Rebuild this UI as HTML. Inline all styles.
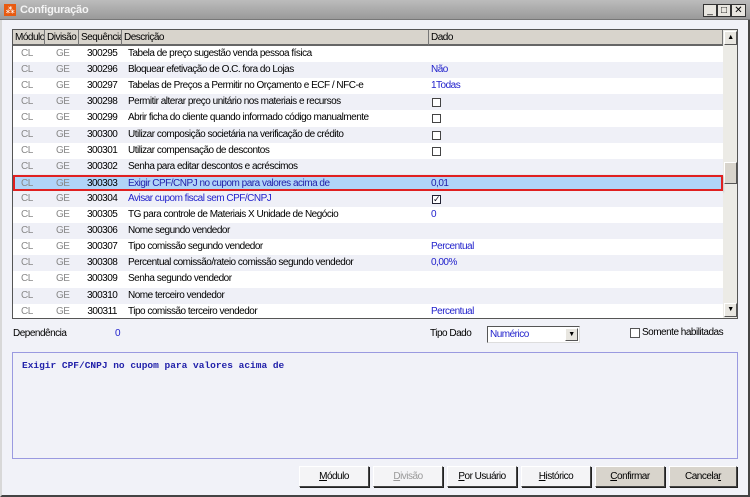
<!DOCTYPE html>
<html><head><meta charset="utf-8"><style>
*{box-sizing:border-box;margin:0;padding:0}
body{width:750px;height:497px;overflow:hidden;background:#f1f2f8;font-family:"Liberation Sans",sans-serif;font-size:10px;letter-spacing:-0.5px;color:#000;position:relative}
.abs{position:absolute}
#title{left:0;top:0;width:750px;height:20px;background:linear-gradient(#bcbcbc,#9a9a9a);color:#f4f4f4;font-weight:bold;font-size:11px;letter-spacing:-0.2px;line-height:20px;padding-left:20px;border-bottom:1px solid #777}
#win{left:0;top:20px;width:750px;height:477px;border:2px solid #d8d8d8;border-top:none;border-bottom:2px solid #444;border-right:2px solid #444}
.tb{top:4px;width:14px;height:13px;background:#e8e6e0;border:1px solid #333;font-size:10px;line-height:11px;text-align:center;color:#000;letter-spacing:0}
#grid{left:12px;top:29px;width:726px;height:290px;border:1px solid #555;background:#fff;overflow:hidden}
.hdr{position:absolute;top:0;height:16px;background:#d8d4cc;border-right:1px solid #777;border-bottom:2px solid #666;line-height:15px;padding-left:2px;font-size:10px;white-space:nowrap;overflow:hidden}
.row{position:absolute;left:0;width:710px;height:16.1px;line-height:16px;font-size:10px}
.row span{position:absolute;top:0;white-space:nowrap}
.c1{left:8px;color:#888}.c2{left:43px;color:#888}.c3{left:74px;width:30px;text-align:right}.c4{left:115px}.c5{left:418px;color:#2222cc}
.cb{position:absolute;left:419px;top:4px;width:9px;height:9px;border:1px solid #444;background:#fff}
#sb{left:710px;top:0;width:15px;height:288px;background:#ecebe6}
.btn{position:absolute;top:466px;height:21px;border:1px solid #444;border-top-color:#fff;border-left-color:#fff;box-shadow:1px 1px 0 #222;background:#f4f4f6;text-align:center;line-height:19px;font-size:10px}
</style></head><body>
<div id="title" class="abs">Configuração</div>
<div class="abs" style="left:4px;top:4px;width:12px;height:12px;background:#e85a10;color:#fff;font-size:9px;line-height:12px;text-align:center">⁂</div>
<div class="abs tb" style="left:703px">_</div>
<div class="abs tb" style="left:717px">□</div>
<div class="abs tb" style="left:731px;width:15px">✕</div>
<div id="win" class="abs"></div>

<div id="grid" class="abs">
<div class="hdr" style="left:0;width:32px">Módulo</div>
<div class="hdr" style="left:32px;width:34px">Divisão</div>
<div class="hdr" style="left:66px;width:43px">Sequência</div>
<div class="hdr" style="left:109px;width:307px">Descrição</div>
<div class="hdr" style="left:416px;width:294px">Dado</div>
<div id="sb" class="abs">
 <div class="abs" style="left:1px;top:1px;width:13px;height:14px;background:#e8e6e0;border:1px solid #555;border-top-color:#fff;border-left-color:#fff;font-size:7px;text-align:center;line-height:12px">▲</div>
 <div class="abs" style="left:1px;top:132px;width:13px;height:22px;background:#d8d4cc;border:1px solid #555;border-top-color:#fff;border-left-color:#fff"></div>
 <div class="abs" style="left:1px;top:273px;width:13px;height:14px;background:#e8e6e0;border:1px solid #555;border-top-color:#fff;border-left-color:#fff;font-size:7px;text-align:center;line-height:12px">▼</div>
</div>
<div class="row" style="top:16px;background:#fff"><span class="c1">CL</span><span class="c2">GE</span><span class="c3">300295</span><span class="c4">Tabela de preço sugestão venda pessoa física</span></div>
<div class="row" style="top:32.1px;background:#eff0f7"><span class="c1">CL</span><span class="c2">GE</span><span class="c3">300296</span><span class="c4">Bloquear efetivação de O.C. fora do Lojas</span><span class="c5">Não</span></div>
<div class="row" style="top:48.2px;background:#fff"><span class="c1">CL</span><span class="c2">GE</span><span class="c3">300297</span><span class="c4">Tabelas de Preços a Permitir no Orçamento e ECF / NFC-e</span><span class="c5">1Todas</span></div>
<div class="row" style="top:64.3px;background:#eff0f7"><span class="c1">CL</span><span class="c2">GE</span><span class="c3">300298</span><span class="c4">Permitir alterar preço unitário nos materiais e recursos</span><i class="cb"></i></div>
<div class="row" style="top:80.4px;background:#fff"><span class="c1">CL</span><span class="c2">GE</span><span class="c3">300299</span><span class="c4">Abrir ficha do cliente quando informado código manualmente</span><i class="cb"></i></div>
<div class="row" style="top:96.5px;background:#eff0f7"><span class="c1">CL</span><span class="c2">GE</span><span class="c3">300300</span><span class="c4">Utilizar composição societária na verificação de crédito</span><i class="cb"></i></div>
<div class="row" style="top:112.6px;background:#fff"><span class="c1">CL</span><span class="c2">GE</span><span class="c3">300301</span><span class="c4">Utilizar compensação de descontos</span><i class="cb"></i></div>
<div class="row" style="top:128.7px;background:#eff0f7"><span class="c1">CL</span><span class="c2">GE</span><span class="c3">300302</span><span class="c4">Senha para editar descontos e acréscimos</span></div>
<div class="row" style="top:144.8px;background:#b0d4f8;border:2px solid #e02020;box-shadow:0 1px 2px #999"><span class="c1" style="left:6px;top:-1px">CL</span><span class="c2" style="left:41px;top:-1px">GE</span><span class="c3" style="left:72px;top:-1px">300303</span><span class="c4" style="left:113px;top:-1px;color:#2222aa">Exigir CPF/CNPJ no cupom para valores acima de</span><span class="c5" style="left:416px;top:-1px;color:#2222aa">0,01</span></div>
<div class="row" style="top:160.9px;background:#eff0f7"><span class="c1">CL</span><span class="c2">GE</span><span class="c3">300304</span><span class="c4" style="color:#2222cc">Avisar cupom fiscal sem CPF/CNPJ</span><i class="cb" style="border-color:#223;font-size:9px;line-height:7px;color:#112;font-style:normal;text-align:center">✓</i></div>
<div class="row" style="top:177px;background:#fff"><span class="c1">CL</span><span class="c2">GE</span><span class="c3">300305</span><span class="c4">TG para controle de Materiais X Unidade de Negócio</span><span class="c5">0</span></div>
<div class="row" style="top:193.1px;background:#eff0f7"><span class="c1">CL</span><span class="c2">GE</span><span class="c3">300306</span><span class="c4">Nome segundo vendedor</span></div>
<div class="row" style="top:209.2px;background:#fff"><span class="c1">CL</span><span class="c2">GE</span><span class="c3">300307</span><span class="c4">Tipo comissão segundo vendedor</span><span class="c5">Percentual</span></div>
<div class="row" style="top:225.3px;background:#eff0f7"><span class="c1">CL</span><span class="c2">GE</span><span class="c3">300308</span><span class="c4">Percentual comissão/rateio comissão segundo vendedor</span><span class="c5">0,00%</span></div>
<div class="row" style="top:241.4px;background:#fff"><span class="c1">CL</span><span class="c2">GE</span><span class="c3">300309</span><span class="c4">Senha segundo vendedor</span></div>
<div class="row" style="top:257.5px;background:#eff0f7"><span class="c1">CL</span><span class="c2">GE</span><span class="c3">300310</span><span class="c4">Nome terceiro vendedor</span></div>
<div class="row" style="top:273.6px;background:#fff"><span class="c1">CL</span><span class="c2">GE</span><span class="c3">300311</span><span class="c4">Tipo comissão terceiro vendedor</span><span class="c5">Percentual</span></div>
</div>

<div class="abs" style="left:13px;top:328px">Dependência</div>
<div class="abs" style="left:115px;top:328px;color:#2222cc">0</div>
<div class="abs" style="left:430px;top:328px">Tipo Dado</div>
<div class="abs" style="left:487px;top:326px;width:93px;height:17px;background:#fff;border:1px solid #555;border-right-color:#ddd;border-bottom-color:#ddd;color:#2222cc;line-height:15px;padding-left:2px">Numérico
 <div class="abs" style="right:1px;top:1px;width:13px;height:13px;background:#e8e6e0;border:1px solid #555;border-top-color:#fff;border-left-color:#fff;font-size:7px;color:#000;text-align:center;line-height:11px">▼</div></div>
<div class="abs" style="left:630px;top:328px;width:10px;height:10px;border:1px solid #555;background:#fff"></div>
<div class="abs" style="left:642px;top:327px">Somente habilitadas</div>

<div class="abs" style="left:12px;top:352px;width:726px;height:107px;border:1px solid #9a9ae0;background:#f1f2f8"></div>
<div class="abs" style="left:22px;top:360px;font-family:'Liberation Mono',monospace;font-size:9.5px;letter-spacing:0;font-weight:bold;color:#2222aa">Exigir CPF/CNPJ no cupom para valores acima de</div>

<div class="btn" style="left:299px;width:70px"><u>M</u>ódulo</div>
<div class="btn" style="left:373px;width:70px;color:#999"><u>D</u>ivisão</div>
<div class="btn" style="left:447px;width:70px"><u>P</u>or Usuário</div>
<div class="btn" style="left:521px;width:70px"><u>H</u>istórico</div>
<div class="btn" style="left:595px;width:70px;background:#d8d4cc"><u>C</u>onfirmar</div>
<div class="btn" style="left:669px;width:68px;background:#d8d4cc">Cancela<u>r</u></div>
</body></html>
